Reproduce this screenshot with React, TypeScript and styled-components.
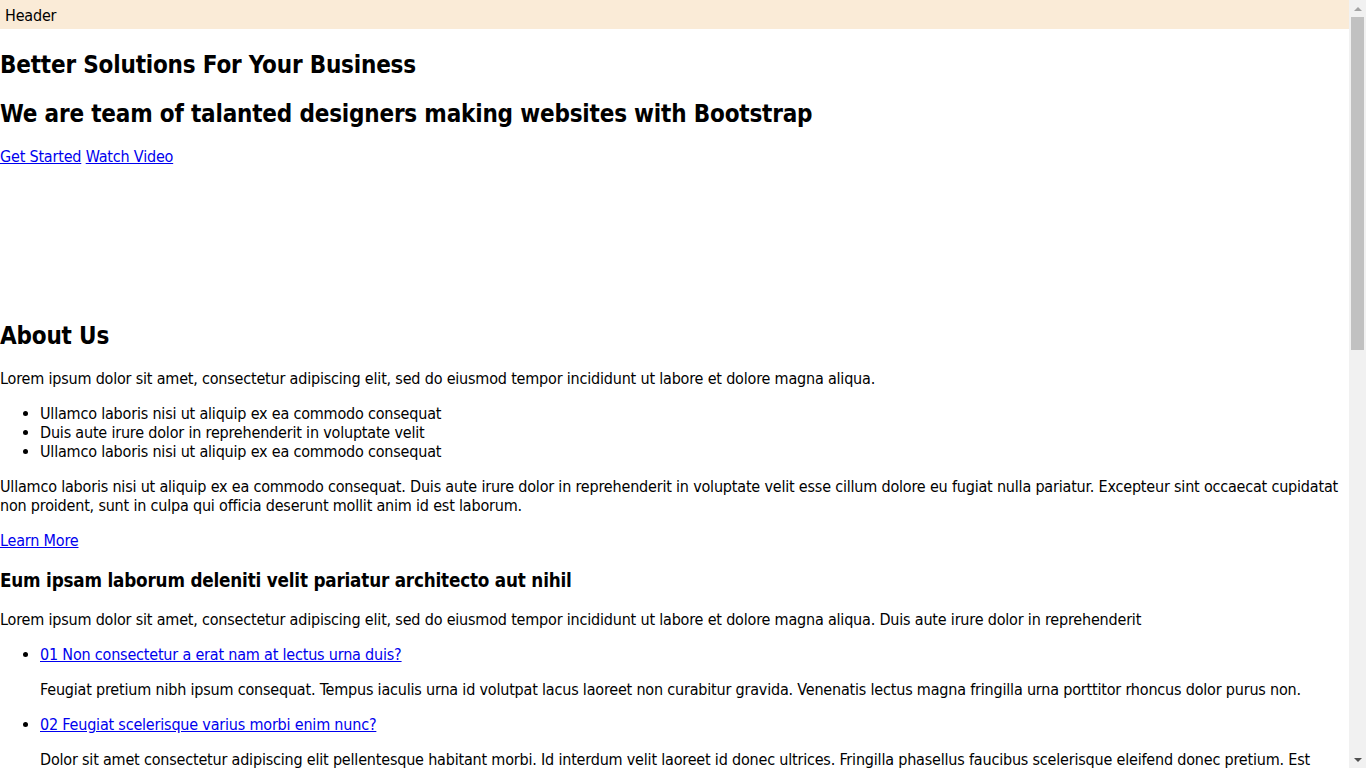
import React from "react";
import styled, { createGlobalStyle } from "styled-components";

const Global = createGlobalStyle`
  html, body { margin: 0; padding: 0; background: #ffffff; }
  body {
    font-family: "DejaVu Sans Condensed", "DejaVu Sans", sans-serif;
    font-stretch: condensed;
    font-size: 16px;
    letter-spacing: -0.19px;
    color: #000000;
  }
  a { color: #0000ee; }
`;

const Page = styled.div`
  display: grid;
  grid-template-columns: minmax(0, 1fr) 17px;
  align-items: start;
`;

const Main = styled.main`
  display: block;
  min-width: 0;
`;

const Scrollbar = styled.aside`
  position: sticky;
  top: 0;
  height: 100vh;
  background: #f1f1f1;
  display: flex;
  flex-direction: column;
`;

const ScrollButton = styled.div`
  height: 17px;
  display: flex;
  align-items: center;
  justify-content: center;
  flex: none;
`;

const Arrow = styled.span<{ $dir: "up" | "down"; $active?: boolean }>`
  width: 0;
  height: 0;
  border-left: 4px solid transparent;
  border-right: 4px solid transparent;
  ${(p) =>
    p.$dir === "up"
      ? `border-bottom: 4px solid ${p.$active ? "#505050" : "#a3a3a3"};`
      : `border-top: 4px solid ${p.$active ? "#505050" : "#a3a3a3"};`}
`;

const Thumb = styled.div`
  height: 333px;
  margin: 0 2px;
  background: #c1c1c1;
  flex: none;
`;

const Track = styled.div`
  flex: 1;
`;

const Header = styled.header`
  background: #faebd7;
  padding: 6px 5px 4px;
  line-height: 19px;
`;

const Heading = styled.h2`
  font-size: 24px;
  font-weight: bold;
  line-height: 26px;
  padding-top: 3px;
  margin: 20px 0;
`;

const SubHeading = styled.h3`
  font-size: 18.72px;
  font-weight: bold;
  line-height: 23px;
  margin: 18.72px 0;
`;

const Text = styled.p`
  margin: 16px 0;
  line-height: 19px;
`;

const List = styled.ul`
  margin: 16px 0;
  padding-left: 40px;
  line-height: 19px;
`;

const HeroArt = styled.div`
  height: 118px;
`;

const Section = styled.section`
  display: block;
`;

const faqs = [
  {
    q: "01 Non consectetur a erat nam at lectus urna duis?",
    a: "Feugiat pretium nibh ipsum consequat. Tempus iaculis urna id volutpat lacus laoreet non curabitur gravida. Venenatis lectus magna fringilla urna porttitor rhoncus dolor purus non.",
  },
  {
    q: "02 Feugiat scelerisque varius morbi enim nunc?",
    a: "Dolor sit amet consectetur adipiscing elit pellentesque habitant morbi. Id interdum velit laoreet id donec ultrices. Fringilla phasellus faucibus scelerisque eleifend donec pretium. Est pellentesque elit ullamcorper dignissim. Mauris ultrices eros in cursus turpis massa tincidunt dui.",
  },
  {
    q: "03 Dolor sit amet consectetur adipiscing elit?",
    a: "Eleifend mi in nulla posuere sollicitudin aliquam ultrices sagittis orci. Faucibus pulvinar elementum integer enim. Sem nulla pharetra diam sit amet nisl suscipit. Rutrum tellus pellentesque eu tincidunt. Lectus urna duis convallis convallis tellus. Urna molestie at elementum eu facilisis sed odio morbi quis",
  },
  {
    q: "04 Tempus quam pellentesque nec nam aliquam sem et tortor consequat?",
    a: "Molestie a iaculis at erat pellentesque adipiscing commodo. Dignissim suspendisse in est ante in. Nunc vel risus commodo viverra maecenas accumsan. Sit amet nisl suscipit adipiscing bibendum est. Purus gravida quis blandit turpis cursus in.",
  },
  {
    q: "05 Tortor vitae purus faucibus ornare. Varius vel pharetra vel turpis nunc eget lorem dolor?",
    a: "Laoreet sit amet cursus sit amet dictum sit amet justo. Mauris vitae ultricies leo integer malesuada nunc vel. Tincidunt eget nullam non nisi est sit amet. Turpis nunc eget lorem dolor sed. Ut venenatis tellus in metus vulputate eu scelerisque.",
  },
];

export default function App() {
  return (
    <Page>
      <Global />
      <Main>
        <Header>Header</Header>
        <Section>
          <Heading>Better Solutions For Your Business</Heading>
          <Heading>We are team of talanted designers making websites with Bootstrap</Heading>
          <Text>
            <a href="#about">Get Started</a> <a href="#video">Watch Video</a>
          </Text>
          <HeroArt />
        </Section>
        <Section id="about">
          <Heading>About Us</Heading>
          <Text>
            Lorem ipsum dolor sit amet, consectetur adipiscing elit, sed do eiusmod tempor incididunt ut labore et dolore magna aliqua.
          </Text>
          <List>
            <li>Ullamco laboris nisi ut aliquip ex ea commodo consequat</li>
            <li>Duis aute irure dolor in reprehenderit in voluptate velit</li>
            <li>Ullamco laboris nisi ut aliquip ex ea commodo consequat</li>
          </List>
          <Text>
            Ullamco laboris nisi ut aliquip ex ea commodo consequat. Duis aute irure dolor in reprehenderit in voluptate velit esse cillum dolore eu fugiat nulla pariatur. Excepteur sint occaecat cupidatat non proident, sunt in culpa qui officia deserunt mollit anim id est laborum.
          </Text>
          <Text>
            <a href="#more">Learn More</a>
          </Text>
        </Section>
        <Section>
          <SubHeading>Eum ipsam laborum deleniti velit pariatur architecto aut nihil</SubHeading>
          <Text>
            Lorem ipsum dolor sit amet, consectetur adipiscing elit, sed do eiusmod tempor incididunt ut labore et dolore magna aliqua. Duis aute irure dolor in reprehenderit
          </Text>
          <List>
            {faqs.map((f) => (
              <li key={f.q}>
                <a href="#faq">{f.q}</a>
                <Text>{f.a}</Text>
              </li>
            ))}
          </List>
        </Section>
        <Section>
          <Heading>Services</Heading>
          <Text>
            Magnam dolores commodi suscipit. Necessitatibus eius consequatur ex aliquid fuga eum quidem. Sit sint consectetur velit. Quisquam quos quisquam cupiditate. Et nemo qui impedit suscipit alias ea. Quia fugiat sit in iste officiis commodi quidem hic quas.
          </Text>
          <List>
            <li>Lorem Ipsum — Voluptatum deleniti atque corrupti quos dolores et quas molestias excepturi</li>
            <li>Sed ut perspiciatis — Duis aute irure dolor in reprehenderit in voluptate velit esse cillum dolore</li>
            <li>Magni Dolores — Excepteur sint occaecat cupidatat non proident, sunt in culpa qui officia</li>
            <li>Nemo Enim — At vero eos et accusamus et iusto odio dignissimos ducimus qui blanditiis</li>
          </List>
        </Section>
      </Main>
      <Scrollbar aria-hidden="true">
        <ScrollButton>
          <Arrow $dir="up" />
        </ScrollButton>
        <Thumb />
        <Track />
        <ScrollButton>
          <Arrow $dir="down" $active />
        </ScrollButton>
      </Scrollbar>
    </Page>
  );
}
